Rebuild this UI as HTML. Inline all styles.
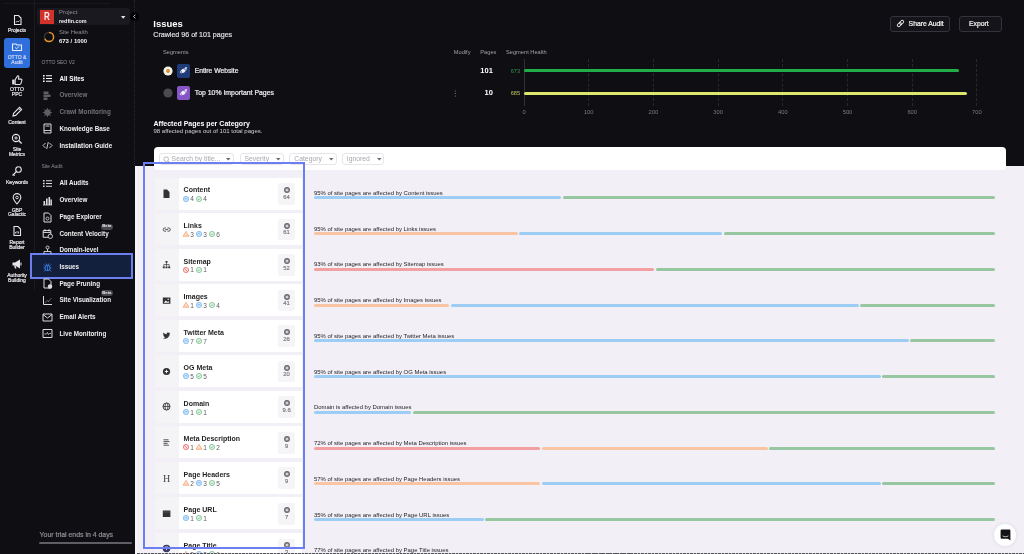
<!DOCTYPE html>
<html><head><meta charset="utf-8"><style>
html,body{margin:0;padding:0;width:1024px;height:554px;overflow:hidden;background:#0f0e13;font-family:"Liberation Sans",sans-serif}
.a{position:absolute;display:block}
.t{position:absolute;white-space:nowrap;font-family:"Liberation Sans",sans-serif}
#w{position:absolute;left:0;top:0;width:1024px;height:554px;overflow:hidden;filter:blur(0.25px);}
</style></head><body><div id="w">
<div class="a" style="left:0.00px;top:0.00px;width:1024.00px;height:554.00px;background:#0f0e13"></div>
<div class="a" style="left:135.00px;top:166.00px;width:889.00px;height:388.00px;background:#f2f0f6"></div>
<div class="a" style="left:33.50px;top:0.00px;width:1.00px;height:290.00px;background:#1b1a21"></div>
<div class="a" style="left:4.00px;top:2.50px;width:106.00px;height:0.80px;background:#19181e"></div>
<div class="a" style="left:3.80px;top:38.00px;width:26.50px;height:29.60px;background:#2f6fdc;border-radius:3px"></div>
<div class="t" style="left:-283.00px;width:600px;text-align:center;top:27.78px;font-size:5.0px;line-height:5.58px;color:#e8e8ea;-webkit-text-stroke:0.2px currentColor;">Projects</div>
<div class="t" style="left:-283.00px;width:600px;text-align:center;top:54.68px;font-size:5.0px;line-height:5.58px;color:#cfd8f5;-webkit-text-stroke:0.2px currentColor;">OTTO &</div>
<div class="t" style="left:-283.00px;width:600px;text-align:center;top:59.77px;font-size:5.0px;line-height:5.58px;color:#cfd8f5;-webkit-text-stroke:0.2px currentColor;">Audit</div>
<div class="t" style="left:-283.00px;width:600px;text-align:center;top:86.77px;font-size:5.0px;line-height:5.58px;color:#e8e8ea;-webkit-text-stroke:0.2px currentColor;">OTTO</div>
<div class="t" style="left:-283.00px;width:600px;text-align:center;top:92.37px;font-size:5.0px;line-height:5.58px;color:#e8e8ea;-webkit-text-stroke:0.2px currentColor;">PPC</div>
<div class="t" style="left:-283.00px;width:600px;text-align:center;top:119.77px;font-size:5.0px;line-height:5.58px;color:#e8e8ea;-webkit-text-stroke:0.2px currentColor;">Content</div>
<div class="t" style="left:-283.00px;width:600px;text-align:center;top:146.77px;font-size:5.0px;line-height:5.58px;color:#e8e8ea;-webkit-text-stroke:0.2px currentColor;">Site</div>
<div class="t" style="left:-283.00px;width:600px;text-align:center;top:152.27px;font-size:5.0px;line-height:5.58px;color:#e8e8ea;-webkit-text-stroke:0.2px currentColor;">Metrics</div>
<div class="t" style="left:-283.00px;width:600px;text-align:center;top:179.77px;font-size:5.0px;line-height:5.58px;color:#e8e8ea;-webkit-text-stroke:0.2px currentColor;">Keywords</div>
<div class="t" style="left:-283.00px;width:600px;text-align:center;top:207.77px;font-size:5.0px;line-height:5.58px;color:#e8e8ea;-webkit-text-stroke:0.2px currentColor;">GBP</div>
<div class="t" style="left:-283.00px;width:600px;text-align:center;top:212.37px;font-size:5.0px;line-height:5.58px;color:#e8e8ea;-webkit-text-stroke:0.2px currentColor;">Galactic</div>
<div class="t" style="left:-283.00px;width:600px;text-align:center;top:239.77px;font-size:5.0px;line-height:5.58px;color:#e8e8ea;-webkit-text-stroke:0.2px currentColor;">Report</div>
<div class="t" style="left:-283.00px;width:600px;text-align:center;top:245.27px;font-size:5.0px;line-height:5.58px;color:#e8e8ea;-webkit-text-stroke:0.2px currentColor;">Builder</div>
<div class="t" style="left:-283.00px;width:600px;text-align:center;top:272.78px;font-size:5.0px;line-height:5.58px;color:#e8e8ea;-webkit-text-stroke:0.2px currentColor;">Authority</div>
<div class="t" style="left:-283.00px;width:600px;text-align:center;top:278.28px;font-size:5.0px;line-height:5.58px;color:#e8e8ea;-webkit-text-stroke:0.2px currentColor;">Building</div>
<svg class="a" style="left:11.00px;top:13.60px;" width="12.0" height="12.0" viewBox="0 0 12.0 12.0"><g transform="scale(1.0)"><path d="M3.5 1.5h4l2.5 2.5v6.5h-6.5z" fill="none" stroke="#e6e6e8" stroke-width="1.1"/><path d="M5 8.5l1.2-1.5 1 1 1.3-1.5" fill="none" stroke="#e6e6e8" stroke-width="0.8"/></g></svg>
<svg class="a" style="left:11.00px;top:41.40px;" width="12.0" height="12.0" viewBox="0 0 12.0 12.0"><g transform="scale(1.0)"><path d="M1.5 3h3.5l1 1h4.5v5.5h-9z" fill="none" stroke="#e8eefc" stroke-width="1.1"/><path d="M4.2 6.5l1.4 1.3 2.4-2.4" fill="none" stroke="#e8eefc" stroke-width="1"/></g></svg>
<svg class="a" style="left:11.00px;top:73.80px;" width="12.0" height="12.0" viewBox="0 0 12.0 12.0"><g transform="scale(1.0)"><path d="M1.2 5.6h2.4v4.8H1.2z" fill="#e6e6e8"/><path d="M4.2 5.6l2.4-3.9c.9 0 1.4.6 1.2 1.5l-.4 1.9h2.6c.7 0 1.1.6.9 1.2l-1 3.3c-.2.5-.5.8-1 .8H4.2z" fill="none" stroke="#e6e6e8" stroke-width="1.05" stroke-linejoin="round"/></g></svg>
<svg class="a" style="left:11.00px;top:106.00px;" width="12.0" height="12.0" viewBox="0 0 12.0 12.0"><g transform="scale(1.0)"><path d="M2 10l.6-2.6 6-6 2 2-6 6z" fill="none" stroke="#e6e6e8" stroke-width="1.1"/><path d="M7.6 2.4l2 2" stroke="#e6e6e8" stroke-width="1"/></g></svg>
<svg class="a" style="left:11.00px;top:133.00px;" width="12.0" height="12.0" viewBox="0 0 12.0 12.0"><g transform="scale(1.0)"><circle cx="5" cy="5" r="3.6" fill="none" stroke="#e6e6e8" stroke-width="1.1"/><path d="M7.6 7.6l3 3" stroke="#e6e6e8" stroke-width="1.4"/><path d="M5 3.2v3.6M3.2 5h3.6" stroke="#e6e6e8" stroke-width="0.9"/></g></svg>
<svg class="a" style="left:11.00px;top:164.60px;" width="12.0" height="12.0" viewBox="0 0 12.0 12.0"><g transform="scale(1.0)"><circle cx="7.5" cy="4.5" r="2.8" fill="none" stroke="#e6e6e8" stroke-width="1.1"/><path d="M5.5 6.5l-4 4M2.5 9.5l1.2 1.2" stroke="#e6e6e8" stroke-width="1.1"/></g></svg>
<svg class="a" style="left:11.00px;top:193.00px;" width="12.0" height="12.0" viewBox="0 0 12.0 12.0"><g transform="scale(1.0)"><path d="M6 11c-2.5-3-3.8-5-3.8-6.6a3.8 3.8 0 0 1 7.6 0c0 1.6-1.3 3.6-3.8 6.6z" fill="none" stroke="#e6e6e8" stroke-width="1.1"/><circle cx="6" cy="4.5" r="1.3" fill="none" stroke="#e6e6e8" stroke-width="0.9"/></g></svg>
<svg class="a" style="left:11.00px;top:224.60px;" width="12.0" height="12.0" viewBox="0 0 12.0 12.0"><g transform="scale(1.0)"><path d="M3 1.5h4l2.5 2.5v6.5h-6.5z" fill="none" stroke="#e6e6e8" stroke-width="1.1"/><path d="M4.5 8.5v-1.5M6 8.5v-2.5M7.5 8.5v-2" stroke="#e6e6e8" stroke-width="0.8"/></g></svg>
<svg class="a" style="left:11.00px;top:257.50px;" width="12.0" height="12.0" viewBox="0 0 12.0 12.0"><g transform="scale(1.0)"><path d="M1.5 4.5h2.5l5-3v9l-5-3h-2.5z" fill="#e6e6e8"/><path d="M3 7.5l1 3h1.5l-1-3z" fill="#e6e6e8"/><path d="M10 4.5v3" stroke="#e6e6e8" stroke-width="1"/></g></svg>
<div class="a" style="left:37.00px;top:8.00px;width:92.60px;height:17.00px;background:#1a1920;border-radius:3px"></div>
<div class="a" style="left:40.00px;top:9.70px;width:14.00px;height:13.90px;background:#d2322a"></div>
<div class="t" style="left:-253.00px;width:600px;text-align:center;top:10.95px;font-size:10px;line-height:11.17px;color:#f6eeee;font-weight:bold;transform:scaleX(0.8);">R</div>
<div class="t" style="left:59.00px;top:9.26px;font-size:5.9px;line-height:6.59px;color:#8f8f95;">Project</div>
<div class="t" style="left:59.00px;top:17.81px;font-size:5.4px;line-height:6.03px;color:#f2f2f2;font-weight:bold;">redfin.com</div>
<svg class="a" style="left:120.60px;top:16.20px;" width="5" height="4" viewBox="0 0 5 4"><path d="M0 0h4.4l-2.2 2.8z" fill="#e6e6e6"/></svg>
<div class="a" style="left:134px;top:0;width:0;height:166px;border-left:1px dotted #2a292f"></div>
<svg class="a" style="left:129.50px;top:11.50px;" width="9" height="9" viewBox="0 0 9 9"><circle cx="4.5" cy="4.5" r="4.5" fill="#000"/><path d="M5.4 2.7l-1.8 1.8 1.8 1.8" fill="none" stroke="#ddd" stroke-width="0.9"/></svg>
<svg class="a" style="left:42.60px;top:31.00px;" width="12" height="12" viewBox="0 0 12 12"><circle cx="6" cy="6" r="4.6" fill="none" stroke="#e8962c" stroke-width="1.5" stroke-dasharray="19.5 9.4" transform="rotate(-90 6 6)"/><circle cx="6" cy="6" r="4.6" fill="none" stroke="#3a3530" stroke-width="1.5" stroke-dasharray="0 19.5 9.4 0" transform="rotate(-90 6 6)"/></svg>
<div class="t" style="left:59.00px;top:29.26px;font-size:5.9px;line-height:6.59px;color:#8f8f95;">Site Health</div>
<div class="t" style="left:59.00px;top:37.91px;font-size:5.96px;line-height:6.66px;color:#f2f2f2;font-weight:bold;">673 / 1000</div>
<div class="t" style="left:41.50px;top:60.07px;font-size:5.0px;line-height:5.58px;color:#8f8f95;">OTTO SEO V2</div>
<div class="t" style="left:59.40px;top:74.84px;font-size:6.3px;line-height:7.04px;color:#ffffff;font-weight:bold;">All Sites</div>
<div class="t" style="left:59.40px;top:91.24px;font-size:6.3px;line-height:7.04px;color:#727278;font-weight:bold;">Overview</div>
<div class="t" style="left:59.40px;top:108.04px;font-size:6.3px;line-height:7.04px;color:#727278;font-weight:bold;">Crawl Monitoring</div>
<div class="t" style="left:59.40px;top:124.84px;font-size:6.3px;line-height:7.04px;color:#f0f0f0;font-weight:bold;">Knowledge Base</div>
<div class="t" style="left:59.40px;top:141.64px;font-size:6.3px;line-height:7.04px;color:#f0f0f0;font-weight:bold;">Installation Guide</div>
<svg class="a" style="left:42.00px;top:73.30px;" width="11" height="11" viewBox="0 0 11 11"><path d="M1 2h1.6v1.6H1zM1 4.7h1.6v1.6H1zM1 7.4h1.6V9H1z" fill="#fff"/><path d="M4 2.8h6M4 5.5h6M4 8.2h6" stroke="#fff" stroke-width="1.1"/></svg>
<svg class="a" style="left:42.00px;top:89.70px;" width="11" height="11" viewBox="0 0 11 11"><path d="M1.5 1.5h5v2.5h-5zM1.5 4.5h7v2.5h-7zM1.5 7.5h4v2.5h-4z" fill="#5e5e63"/></svg>
<svg class="a" style="left:42.00px;top:106.50px;" width="11" height="11" viewBox="0 0 11 11"><circle cx="5.5" cy="5.5" r="3.2" fill="#5e5e63"/><path d="M5.5 1v9M1 5.5h9M2.3 2.3l6.4 6.4M8.7 2.3l-6.4 6.4" stroke="#5e5e63" stroke-width="0.9"/></svg>
<svg class="a" style="left:42.00px;top:123.30px;" width="11" height="11" viewBox="0 0 11 11"><path d="M2 1h7v9H2z" fill="none" stroke="#dcdcdc" stroke-width="1"/><path d="M2 7.5h7M3.5 3h4" stroke="#dcdcdc" stroke-width="0.9"/></svg>
<svg class="a" style="left:42.00px;top:140.10px;" width="11" height="11" viewBox="0 0 11 11"><path d="M3.5 3L1 5.5 3.5 8M7.5 3L10 5.5 7.5 8M6.3 2L4.7 9" fill="none" stroke="#dcdcdc" stroke-width="0.9"/></svg>
<div class="t" style="left:41.50px;top:163.97px;font-size:5.0px;line-height:5.58px;color:#8f8f95;">Site Audit</div>
<div class="a" style="left:30.30px;top:252.60px;width:103.20px;height:26.70px;background:#13203d;border:2px solid #6c7ff2;box-sizing:border-box"></div>
<div class="t" style="left:59.40px;top:179.34px;font-size:6.3px;line-height:7.04px;color:#f0f0f0;font-weight:bold;">All Audits</div>
<div class="t" style="left:59.40px;top:196.14px;font-size:6.3px;line-height:7.04px;color:#f0f0f0;font-weight:bold;">Overview</div>
<div class="t" style="left:59.40px;top:212.94px;font-size:6.3px;line-height:7.04px;color:#f0f0f0;font-weight:bold;">Page Explorer</div>
<div class="t" style="left:59.40px;top:229.74px;font-size:6.3px;line-height:7.04px;color:#f0f0f0;font-weight:bold;">Content Velocity</div>
<div class="t" style="left:59.40px;top:246.14px;font-size:6.3px;line-height:7.04px;color:#f0f0f0;font-weight:bold;">Domain-level</div>
<div class="t" style="left:59.40px;top:262.94px;font-size:6.3px;line-height:7.04px;color:#f0f0f0;font-weight:bold;">Issues</div>
<div class="t" style="left:59.40px;top:279.74px;font-size:6.3px;line-height:7.04px;color:#f0f0f0;font-weight:bold;">Page Pruning</div>
<div class="t" style="left:59.40px;top:296.34px;font-size:6.3px;line-height:7.04px;color:#f0f0f0;font-weight:bold;">Site Visualization</div>
<div class="t" style="left:59.40px;top:313.14px;font-size:6.3px;line-height:7.04px;color:#f0f0f0;font-weight:bold;">Email Alerts</div>
<div class="t" style="left:59.40px;top:329.74px;font-size:6.3px;line-height:7.04px;color:#f0f0f0;font-weight:bold;">Live Monitoring</div>
<svg class="a" style="left:42.00px;top:177.90px;" width="11" height="11" viewBox="0 0 11 11"><path d="M1 2h1.6v1.6H1zM1 4.7h1.6v1.6H1zM1 7.4h1.6V9H1z" fill="#dcdcdc"/><path d="M4 2.8h6M4 5.5h6M4 8.2h6" stroke="#dcdcdc" stroke-width="1.1"/></svg>
<svg class="a" style="left:42.00px;top:194.70px;" width="11" height="11" viewBox="0 0 11 11"><path d="M1 10h9" stroke="#dcdcdc" stroke-width="0.8"/><path d="M1.5 6h1.6v4H1.5zM4 3.5h1.6V10H4zM6.5 2h1.6v8H6.5zM8.5 4.5h1.4V10H8.5z" fill="#dcdcdc"/></svg>
<svg class="a" style="left:42.00px;top:211.50px;" width="11" height="11" viewBox="0 0 11 11"><path d="M2 1h4.5l2.5 2.5V10H2z" fill="none" stroke="#dcdcdc" stroke-width="1"/><circle cx="5.5" cy="6.5" r="1.5" fill="none" stroke="#dcdcdc" stroke-width="0.8"/></svg>
<svg class="a" style="left:42.00px;top:228.30px;" width="11" height="11" viewBox="0 0 11 11"><path d="M1.2 2.5h7.6v6.8H1.2z" fill="none" stroke="#dcdcdc" stroke-width="1"/><path d="M1.2 4.5h7.6M3 1v2.5M7 1v2.5" stroke="#dcdcdc" stroke-width="0.9"/><circle cx="8.3" cy="8.3" r="2.2" fill="#0f0e13" stroke="#dcdcdc" stroke-width="0.9"/></svg>
<svg class="a" style="left:42.00px;top:244.70px;" width="11" height="11" viewBox="0 0 11 11"><circle cx="5.5" cy="2.5" r="1.5" fill="none" stroke="#dcdcdc" stroke-width="0.9"/><path d="M5.5 4v2.5M2 9V6.5h7V9" fill="none" stroke="#dcdcdc" stroke-width="0.9"/></svg>
<svg class="a" style="left:42.00px;top:261.50px;" width="11" height="11" viewBox="0 0 11 11"><circle cx="5.5" cy="6" r="2.6" fill="none" stroke="#3c7ff0" stroke-width="1"/><path d="M5.5 3.4v5.2M1.5 6h1.4M8.1 6h1.4M2 2.5l1.5 1.5M9 2.5l-1.5 1.5M2 9.5l1.5-1.5M9 9.5l-1.5-1.5M4 1.5l.8 1.5M7 1.5l-.8 1.5" stroke="#3c7ff0" stroke-width="0.8"/></svg>
<svg class="a" style="left:42.00px;top:278.30px;" width="11" height="11" viewBox="0 0 11 11"><path d="M2 1h4.5l2.5 2.5V10H2z" fill="none" stroke="#dcdcdc" stroke-width="1"/><circle cx="8" cy="8.5" r="2.2" fill="#dcdcdc"/></svg>
<svg class="a" style="left:42.00px;top:294.90px;" width="11" height="11" viewBox="0 0 11 11"><path d="M1.5 1v8.5H10" fill="none" stroke="#dcdcdc" stroke-width="1"/><path d="M3.5 7.5l1.5-2 1.5 1 2.5-3" fill="none" stroke="#dcdcdc" stroke-width="0.8" stroke-dasharray="1 0.8"/></svg>
<svg class="a" style="left:42.00px;top:311.70px;" width="11" height="11" viewBox="0 0 11 11"><path d="M1 2h9v7H1z" fill="none" stroke="#dcdcdc" stroke-width="1"/><path d="M1 2.5l4.5 3.5 4.5-3.5" fill="none" stroke="#dcdcdc" stroke-width="1"/></svg>
<svg class="a" style="left:42.00px;top:328.30px;" width="11" height="11" viewBox="0 0 11 11"><path d="M1 1.5h9v8H1z" fill="none" stroke="#dcdcdc" stroke-width="1"/><path d="M2.5 6h2l1-1.5 1 2 1-1h1.5" fill="none" stroke="#dcdcdc" stroke-width="0.8"/></svg>
<div class="a" style="left:100.50px;top:223.50px;width:12.60px;height:6.00px;background:#46464c;border-radius:3px"></div>
<div class="t" style="left:-193.20px;width:600px;text-align:center;top:224.27px;font-size:4.3px;line-height:4.80px;color:#e8e8ea;font-weight:bold;">Beta</div>
<div class="a" style="left:100.50px;top:290.00px;width:12.60px;height:6.00px;background:#46464c;border-radius:3px"></div>
<div class="t" style="left:-193.20px;width:600px;text-align:center;top:290.77px;font-size:4.3px;line-height:4.80px;color:#e8e8ea;font-weight:bold;">Beta</div>
<div class="t" style="left:39.60px;top:531.09px;font-size:6.92px;line-height:7.73px;color:#8c8c92;-webkit-text-stroke:0.22px currentColor;">Your trial ends in 4 days</div>
<div class="a" style="left:39.10px;top:541.90px;width:93.30px;height:2.20px;background:#5e5e64;border-radius:1px"></div>
<div class="a" style="left:135.00px;top:166.00px;width:2.00px;height:388.00px;background:#f6f5f9"></div>
<div class="t" style="left:153.30px;top:18.90px;font-size:9.5px;line-height:10.61px;color:#ffffff;font-weight:bold;">Issues</div>
<div class="t" style="left:153.30px;top:32.17px;font-size:7.1px;line-height:7.93px;color:#dcdcde;-webkit-text-stroke:0.22px currentColor;">Crawled 96 of 101 pages</div>
<div class="a" style="left:890.20px;top:16.30px;width:59.60px;height:15.30px;border:1px solid #34333a;border-radius:3px;box-sizing:border-box;background:#15141a"></div>
<svg class="a" style="left:895.50px;top:19.30px;" width="9" height="9" viewBox="0 0 9 9"><g transform="rotate(-45 4.5 4.5)"><rect x="0.6" y="3.1" width="4.6" height="2.8" rx="1.4" fill="none" stroke="#eee" stroke-width="0.95"/><rect x="3.8" y="3.1" width="4.6" height="2.8" rx="1.4" fill="none" stroke="#eee" stroke-width="0.95"/></g></svg>
<div class="t" style="left:908.60px;top:20.36px;font-size:6.8px;line-height:7.60px;color:#f2f2f2;-webkit-text-stroke:0.22px currentColor;">Share Audit</div>
<div class="a" style="left:958.50px;top:16.30px;width:43.60px;height:15.30px;border:1px solid #34333a;border-radius:3px;box-sizing:border-box;background:#15141a"></div>
<div class="t" style="left:678.90px;width:600px;text-align:center;top:20.36px;font-size:6.8px;line-height:7.60px;color:#f2f2f2;-webkit-text-stroke:0.22px currentColor;">Export</div>
<div class="t" style="left:163.00px;top:48.78px;font-size:5.7px;line-height:6.37px;color:#a0a0a5;">Segments</div>
<div class="t" style="left:453.75px;top:48.78px;font-size:5.7px;line-height:6.37px;color:#a0a0a5;">Modify</div>
<div class="t" style="left:480.30px;top:48.78px;font-size:5.7px;line-height:6.37px;color:#a0a0a5;">Pages</div>
<div class="t" style="left:506.00px;top:48.78px;font-size:5.7px;line-height:6.37px;color:#a0a0a5;">Segment Health</div>
<svg class="a" style="left:162.80px;top:66.20px;" width="10" height="10" viewBox="0 0 10 10"><circle cx="5" cy="5" r="4.6" fill="#f4f1ea"/><circle cx="5" cy="5" r="1.9" fill="#d98c2a"/></svg>
<svg class="a" style="left:162.80px;top:88.30px;" width="10" height="10" viewBox="0 0 10 10"><circle cx="5" cy="5" r="4.6" fill="#4a4a4f"/></svg>
<div class="a" style="left:177.00px;top:64.00px;width:13.00px;height:13.70px;background:#1f3c78;border-radius:2px"></div>
<div class="a" style="left:177.00px;top:86.00px;width:13.00px;height:13.70px;background:#8756c6;border-radius:2px"></div>
<svg class="a" style="left:179.00px;top:66.35px;" width="9" height="9" viewBox="0 0 9 9"><circle cx="4.2" cy="4.8" r="1.9" fill="#f4f4fa"/><ellipse cx="4.2" cy="4.8" rx="3.4" ry="1.3" transform="rotate(-30 4.2 4.8)" fill="none" stroke="#f4f4fa" stroke-width="0.7"/><circle cx="7" cy="2" r="0.9" fill="#f4f4fa"/></svg>
<svg class="a" style="left:179.00px;top:88.35px;" width="9" height="9" viewBox="0 0 9 9"><circle cx="4.2" cy="4.8" r="1.9" fill="#f4f4fa"/><ellipse cx="4.2" cy="4.8" rx="3.4" ry="1.3" transform="rotate(-30 4.2 4.8)" fill="none" stroke="#f4f4fa" stroke-width="0.7"/><circle cx="7" cy="2" r="0.9" fill="#f4f4fa"/></svg>
<div class="t" style="left:194.70px;top:67.19px;font-size:6.75px;line-height:7.54px;color:#ececee;-webkit-text-stroke:0.22px currentColor;">Entire Website</div>
<div class="t" style="left:194.70px;top:89.10px;font-size:6.9px;line-height:7.71px;color:#ececee;-webkit-text-stroke:0.22px currentColor;">Top 10% Important Pages</div>
<div class="t" style="right:531.20px;top:66.76px;font-size:7.5px;line-height:8.38px;color:#ffffff;font-weight:bold;">101</div>
<div class="t" style="right:531.20px;top:88.76px;font-size:7.5px;line-height:8.38px;color:#ffffff;font-weight:bold;">10</div>
<svg class="a" style="left:453.50px;top:89.50px;" width="3" height="8" viewBox="0 0 3 8"><circle cx="1.3" cy="1" r=".6" fill="#888"/><circle cx="1.3" cy="3.5" r=".6" fill="#888"/><circle cx="1.3" cy="6" r=".6" fill="#888"/></svg>
<div class="t" style="right:504.00px;top:68.04px;font-size:5.6px;line-height:6.26px;color:#2f9a48;">673</div>
<div class="t" style="right:504.00px;top:90.24px;font-size:5.6px;line-height:6.26px;color:#c2c95c;">685</div>
<div class="a" style="left:523.50px;top:58.75px;width:1.00px;height:46.85px;background:#323137"></div>
<div class="a" style="left:588.20px;top:58.75px;height:47px;width:0;border-left:1px dashed #29282e"></div>
<div class="a" style="left:652.90px;top:58.75px;height:47px;width:0;border-left:1px dashed #29282e"></div>
<div class="a" style="left:717.60px;top:58.75px;height:47px;width:0;border-left:1px dashed #29282e"></div>
<div class="a" style="left:782.30px;top:58.75px;height:47px;width:0;border-left:1px dashed #29282e"></div>
<div class="a" style="left:847.00px;top:58.75px;height:47px;width:0;border-left:1px dashed #29282e"></div>
<div class="a" style="left:911.70px;top:58.75px;height:47px;width:0;border-left:1px dashed #29282e"></div>
<div class="a" style="left:976.40px;top:58.75px;height:47px;width:0;border-left:1px dashed #29282e"></div>
<div class="t" style="left:224.00px;width:600px;text-align:center;top:108.95px;font-size:5.75px;line-height:6.42px;color:#7c7c82;">0</div>
<div class="t" style="left:288.70px;width:600px;text-align:center;top:108.95px;font-size:5.75px;line-height:6.42px;color:#7c7c82;">100</div>
<div class="t" style="left:353.40px;width:600px;text-align:center;top:108.95px;font-size:5.75px;line-height:6.42px;color:#7c7c82;">200</div>
<div class="t" style="left:418.10px;width:600px;text-align:center;top:108.95px;font-size:5.75px;line-height:6.42px;color:#7c7c82;">300</div>
<div class="t" style="left:482.80px;width:600px;text-align:center;top:108.95px;font-size:5.75px;line-height:6.42px;color:#7c7c82;">400</div>
<div class="t" style="left:547.50px;width:600px;text-align:center;top:108.95px;font-size:5.75px;line-height:6.42px;color:#7c7c82;">500</div>
<div class="t" style="left:612.20px;width:600px;text-align:center;top:108.95px;font-size:5.75px;line-height:6.42px;color:#7c7c82;">600</div>
<div class="t" style="left:676.90px;width:600px;text-align:center;top:108.95px;font-size:5.75px;line-height:6.42px;color:#7c7c82;">700</div>
<div class="a" style="left:524.00px;top:69.20px;width:435.43px;height:3.00px;background:#22ad4b;border-radius:1.5px"></div>
<div class="a" style="left:524.00px;top:92.10px;width:443.19px;height:3.00px;background:#dce56c;border-radius:1.5px"></div>
<div class="t" style="left:153.50px;top:119.51px;font-size:7.06px;line-height:7.89px;color:#ffffff;font-weight:bold;">Affected Pages per Category</div>
<div class="t" style="left:153.50px;top:128.19px;font-size:6.03px;line-height:6.74px;color:#d0d0d4;">98 affected pages out of 101 total pages.</div>
<div class="a" style="left:153.60px;top:147.20px;width:852.90px;height:22.40px;background:#ffffff;border-radius:4px"></div>
<div class="a" style="left:159.00px;top:152.70px;width:75.00px;height:11.90px;border:1px solid #e6e6ea;border-radius:3px;box-sizing:border-box;background:#fff"></div>
<div class="t" style="left:171.60px;top:154.86px;font-size:6.8px;line-height:7.60px;color:#a9a9ae;">Search by title...</div>
<svg class="a" style="left:226.00px;top:157.50px;" width="5" height="3" viewBox="0 0 5 3"><path d="M0 0h4.5l-2.25 2.6z" fill="#6a6a70"/></svg>
<div class="a" style="left:239.50px;top:152.70px;width:44.50px;height:11.90px;border:1px solid #e6e6ea;border-radius:3px;box-sizing:border-box;background:#fff"></div>
<div class="t" style="left:244.50px;top:154.86px;font-size:6.8px;line-height:7.60px;color:#a9a9ae;">Severity</div>
<svg class="a" style="left:276.00px;top:157.50px;" width="5" height="3" viewBox="0 0 5 3"><path d="M0 0h4.5l-2.25 2.6z" fill="#6a6a70"/></svg>
<div class="a" style="left:289.30px;top:152.70px;width:47.50px;height:11.90px;border:1px solid #e6e6ea;border-radius:3px;box-sizing:border-box;background:#fff"></div>
<div class="t" style="left:294.30px;top:154.86px;font-size:6.8px;line-height:7.60px;color:#a9a9ae;">Category</div>
<svg class="a" style="left:328.80px;top:157.50px;" width="5" height="3" viewBox="0 0 5 3"><path d="M0 0h4.5l-2.25 2.6z" fill="#6a6a70"/></svg>
<div class="a" style="left:341.80px;top:152.70px;width:42.70px;height:11.90px;border:1px solid #e6e6ea;border-radius:3px;box-sizing:border-box;background:#fff"></div>
<div class="t" style="left:346.80px;top:154.86px;font-size:6.8px;line-height:7.60px;color:#a9a9ae;">Ignored</div>
<svg class="a" style="left:376.50px;top:157.50px;" width="5" height="3" viewBox="0 0 5 3"><path d="M0 0h4.5l-2.25 2.6z" fill="#6a6a70"/></svg>
<svg class="a" style="left:163.30px;top:155.80px;" width="7" height="8" viewBox="0 0 7 8"><circle cx="3.2" cy="3.2" r="2.3" fill="none" stroke="#aaa" stroke-width="0.8"/><path d="M4.9 4.9l1.6 1.6" stroke="#aaa" stroke-width="0.8"/></svg>
<div class="a" style="left:155.00px;top:177.70px;width:23.70px;height:32.10px;background:#f4f3f6"></div>
<div class="a" style="left:178.70px;top:177.70px;width:123.00px;height:32.10px;background:#ffffff"></div>
<div class="a" style="left:278.20px;top:183.30px;width:17.00px;height:21.60px;background:#f5f5f7;border-radius:2px"></div>
<svg class="a" style="left:283.60px;top:187.00px;" width="6" height="6" viewBox="0 0 6 6"><circle cx="3" cy="3" r="2.4" fill="#9a9a9e" stroke="#6a6a6e" stroke-width="1.1"/><path d="M3 1.9v2.2M1.9 3h2.2" stroke="#f4f4f6" stroke-width="0.8"/></svg>
<div class="t" style="left:-13.40px;width:600px;text-align:center;top:193.87px;font-size:5.9px;line-height:6.59px;color:#76767a;-webkit-text-stroke:0.15px currentColor;">64</div>
<div class="t" style="left:183.60px;top:186.46px;font-size:7.0px;line-height:7.82px;color:#1f1f22;font-weight:bold;">Content</div>
<div class="t" style="left:190.20px;top:195.42px;font-size:6.5px;line-height:7.26px;color:#5c5c60;">4</div>
<div class="t" style="left:203.20px;top:195.42px;font-size:6.5px;line-height:7.26px;color:#5c5c60;">4</div>
<svg class="a" style="left:180.00px;top:194.70px;" width="120" height="8" viewBox="0 0 120 8"><circle cx="6" cy="4" r="2.7" fill="#c9e3fa" stroke="#7db9ef" stroke-width="0.75"/><path d="M4.7 4.6a1.3 1.3 0 0 1 2.6 0" fill="none" stroke="#6fb0ec" stroke-width="0.6"/><circle cx="19" cy="4" r="2.6" fill="#e3f4e7" stroke="#78c08a" stroke-width="0.8"/><path d="M17.8 4l.9.9 1.5-1.6" fill="none" stroke="#5fb072" stroke-width="0.7"/></svg>
<svg class="a" style="left:162.10px;top:189.20px;" width="9" height="9" viewBox="0 0 9 9"><path d="M1.5 0.5h3.5l2.5 2.5v6.5h-6z" fill="#333"/></svg>
<div class="t" style="left:313.90px;top:189.94px;font-size:5.95px;line-height:6.65px;color:#1e1e22;">95% of site pages are affected by Content issues</div>
<div class="a" style="left:314.00px;top:196.00px;width:247.00px;height:3.00px;background:#9dccf4;border-radius:1.5px"></div>
<div class="a" style="left:562.60px;top:196.00px;width:432.00px;height:3.00px;background:#96c7a0;border-radius:1.5px"></div>
<div class="a" style="left:155.00px;top:213.22px;width:23.70px;height:32.10px;background:#f4f3f6"></div>
<div class="a" style="left:178.70px;top:213.22px;width:123.00px;height:32.10px;background:#ffffff"></div>
<div class="a" style="left:278.20px;top:218.82px;width:17.00px;height:21.60px;background:#f5f5f7;border-radius:2px"></div>
<svg class="a" style="left:283.60px;top:222.52px;" width="6" height="6" viewBox="0 0 6 6"><circle cx="3" cy="3" r="2.4" fill="#9a9a9e" stroke="#6a6a6e" stroke-width="1.1"/><path d="M3 1.9v2.2M1.9 3h2.2" stroke="#f4f4f6" stroke-width="0.8"/></svg>
<div class="t" style="left:-13.40px;width:600px;text-align:center;top:229.39px;font-size:5.9px;line-height:6.59px;color:#76767a;-webkit-text-stroke:0.15px currentColor;">61</div>
<div class="t" style="left:183.60px;top:221.98px;font-size:7.0px;line-height:7.82px;color:#1f1f22;font-weight:bold;">Links</div>
<div class="t" style="left:190.20px;top:230.94px;font-size:6.5px;line-height:7.26px;color:#5c5c60;">3</div>
<div class="t" style="left:203.20px;top:230.94px;font-size:6.5px;line-height:7.26px;color:#5c5c60;">3</div>
<div class="t" style="left:216.20px;top:230.94px;font-size:6.5px;line-height:7.26px;color:#5c5c60;">6</div>
<svg class="a" style="left:180.00px;top:230.22px;" width="120" height="8" viewBox="0 0 120 8"><path d="M6 1.2999999999999998L9 6.3H3z" fill="#fcd3b6" stroke="#f4a272" stroke-width="0.7" stroke-linejoin="round"/><path d="M6 3.1v1.6" stroke="#fff" stroke-width="0.6"/><circle cx="19" cy="4" r="2.7" fill="#c9e3fa" stroke="#7db9ef" stroke-width="0.75"/><path d="M17.7 4.6a1.3 1.3 0 0 1 2.6 0" fill="none" stroke="#6fb0ec" stroke-width="0.6"/><circle cx="32" cy="4" r="2.6" fill="#e3f4e7" stroke="#78c08a" stroke-width="0.8"/><path d="M30.8 4l.9.9 1.5-1.6" fill="none" stroke="#5fb072" stroke-width="0.7"/></svg>
<svg class="a" style="left:162.10px;top:224.72px;" width="9" height="9" viewBox="0 0 9 9"><path d="M4 3H2.8a1.6 1.6 0 0 0 0 3.2H4M5.5 3h1.2a1.6 1.6 0 0 1 0 3.2H5.5M3.3 4.6h2.9" fill="none" stroke="#444" stroke-width="0.9"/></svg>
<div class="t" style="left:313.90px;top:225.69px;font-size:5.95px;line-height:6.65px;color:#1e1e22;">95% of site pages are affected by Links issues</div>
<div class="a" style="left:314.00px;top:232.00px;width:203.50px;height:3.00px;background:#f8c4a2;border-radius:1.5px"></div>
<div class="a" style="left:519.20px;top:232.00px;width:202.80px;height:3.00px;background:#9dccf4;border-radius:1.5px"></div>
<div class="a" style="left:724.00px;top:232.00px;width:270.60px;height:3.00px;background:#96c7a0;border-radius:1.5px"></div>
<div class="a" style="left:155.00px;top:248.74px;width:23.70px;height:32.10px;background:#f4f3f6"></div>
<div class="a" style="left:178.70px;top:248.74px;width:123.00px;height:32.10px;background:#ffffff"></div>
<div class="a" style="left:278.20px;top:254.34px;width:17.00px;height:21.60px;background:#f5f5f7;border-radius:2px"></div>
<svg class="a" style="left:283.60px;top:258.04px;" width="6" height="6" viewBox="0 0 6 6"><circle cx="3" cy="3" r="2.4" fill="#9a9a9e" stroke="#6a6a6e" stroke-width="1.1"/><path d="M3 1.9v2.2M1.9 3h2.2" stroke="#f4f4f6" stroke-width="0.8"/></svg>
<div class="t" style="left:-13.40px;width:600px;text-align:center;top:264.91px;font-size:5.9px;line-height:6.59px;color:#76767a;-webkit-text-stroke:0.15px currentColor;">52</div>
<div class="t" style="left:183.60px;top:257.51px;font-size:7.0px;line-height:7.82px;color:#1f1f22;font-weight:bold;">Sitemap</div>
<div class="t" style="left:190.20px;top:266.46px;font-size:6.5px;line-height:7.26px;color:#5c5c60;">1</div>
<div class="t" style="left:203.20px;top:266.46px;font-size:6.5px;line-height:7.26px;color:#5c5c60;">1</div>
<svg class="a" style="left:180.00px;top:265.74px;" width="120" height="8" viewBox="0 0 120 8"><circle cx="6" cy="4" r="2.6" fill="#fde3e1" stroke="#ec6a62" stroke-width="0.8"/><path d="M4.2 2.2L7.8 5.8" stroke="#ec6a62" stroke-width="0.8"/><circle cx="19" cy="4" r="2.6" fill="#e3f4e7" stroke="#78c08a" stroke-width="0.8"/><path d="M17.8 4l.9.9 1.5-1.6" fill="none" stroke="#5fb072" stroke-width="0.7"/></svg>
<svg class="a" style="left:162.10px;top:260.24px;" width="9" height="9" viewBox="0 0 9 9"><path d="M3.5 1h2v1.8h-2zM0.8 6.5h2v1.8h-2zM3.5 6.5h2v1.8h-2zM6.2 6.5h2v1.8h-2z" fill="#333"/><path d="M4.5 2.8v3.7M1.8 6.5V4.6h5.4v1.9" fill="none" stroke="#333" stroke-width="0.7"/></svg>
<div class="t" style="left:313.90px;top:261.44px;font-size:5.95px;line-height:6.65px;color:#1e1e22;">93% of site pages are affected by Sitemap issues</div>
<div class="a" style="left:314.00px;top:268.00px;width:340.00px;height:3.00px;background:#f2a0a2;border-radius:1.5px"></div>
<div class="a" style="left:655.60px;top:268.00px;width:339.00px;height:3.00px;background:#96c7a0;border-radius:1.5px"></div>
<div class="a" style="left:155.00px;top:284.26px;width:23.70px;height:32.10px;background:#f4f3f6"></div>
<div class="a" style="left:178.70px;top:284.26px;width:123.00px;height:32.10px;background:#ffffff"></div>
<div class="a" style="left:278.20px;top:289.86px;width:17.00px;height:21.60px;background:#f5f5f7;border-radius:2px"></div>
<svg class="a" style="left:283.60px;top:293.56px;" width="6" height="6" viewBox="0 0 6 6"><circle cx="3" cy="3" r="2.4" fill="#9a9a9e" stroke="#6a6a6e" stroke-width="1.1"/><path d="M3 1.9v2.2M1.9 3h2.2" stroke="#f4f4f6" stroke-width="0.8"/></svg>
<div class="t" style="left:-13.40px;width:600px;text-align:center;top:300.43px;font-size:5.9px;line-height:6.59px;color:#76767a;-webkit-text-stroke:0.15px currentColor;">41</div>
<div class="t" style="left:183.60px;top:293.03px;font-size:7.0px;line-height:7.82px;color:#1f1f22;font-weight:bold;">Images</div>
<div class="t" style="left:190.20px;top:301.98px;font-size:6.5px;line-height:7.26px;color:#5c5c60;">1</div>
<div class="t" style="left:203.20px;top:301.98px;font-size:6.5px;line-height:7.26px;color:#5c5c60;">3</div>
<div class="t" style="left:216.20px;top:301.98px;font-size:6.5px;line-height:7.26px;color:#5c5c60;">4</div>
<svg class="a" style="left:180.00px;top:301.26px;" width="120" height="8" viewBox="0 0 120 8"><path d="M6 1.2999999999999998L9 6.3H3z" fill="#fcd3b6" stroke="#f4a272" stroke-width="0.7" stroke-linejoin="round"/><path d="M6 3.1v1.6" stroke="#fff" stroke-width="0.6"/><circle cx="19" cy="4" r="2.7" fill="#c9e3fa" stroke="#7db9ef" stroke-width="0.75"/><path d="M17.7 4.6a1.3 1.3 0 0 1 2.6 0" fill="none" stroke="#6fb0ec" stroke-width="0.6"/><circle cx="32" cy="4" r="2.6" fill="#e3f4e7" stroke="#78c08a" stroke-width="0.8"/><path d="M30.8 4l.9.9 1.5-1.6" fill="none" stroke="#5fb072" stroke-width="0.7"/></svg>
<svg class="a" style="left:162.10px;top:295.76px;" width="9" height="9" viewBox="0 0 9 9"><path d="M0.8 1.5h7.6v6.3H0.8z" fill="#333"/><path d="M1.8 6.8l2-2.2 1.4 1.3 1-.9 1.2 1.8z" fill="#fff"/><circle cx="6.2" cy="3.3" r=".7" fill="#fff"/></svg>
<div class="t" style="left:313.90px;top:297.19px;font-size:5.95px;line-height:6.65px;color:#1e1e22;">95% of site pages are affected by Images issues</div>
<div class="a" style="left:314.00px;top:304.00px;width:135.40px;height:3.00px;background:#f8c4a2;border-radius:1.5px"></div>
<div class="a" style="left:451.20px;top:304.00px;width:407.50px;height:3.00px;background:#9dccf4;border-radius:1.5px"></div>
<div class="a" style="left:859.70px;top:304.00px;width:134.90px;height:3.00px;background:#96c7a0;border-radius:1.5px"></div>
<div class="a" style="left:155.00px;top:319.78px;width:23.70px;height:32.10px;background:#f4f3f6"></div>
<div class="a" style="left:178.70px;top:319.78px;width:123.00px;height:32.10px;background:#ffffff"></div>
<div class="a" style="left:278.20px;top:325.38px;width:17.00px;height:21.60px;background:#f5f5f7;border-radius:2px"></div>
<svg class="a" style="left:283.60px;top:329.08px;" width="6" height="6" viewBox="0 0 6 6"><circle cx="3" cy="3" r="2.4" fill="#9a9a9e" stroke="#6a6a6e" stroke-width="1.1"/><path d="M3 1.9v2.2M1.9 3h2.2" stroke="#f4f4f6" stroke-width="0.8"/></svg>
<div class="t" style="left:-13.40px;width:600px;text-align:center;top:335.95px;font-size:5.9px;line-height:6.59px;color:#76767a;-webkit-text-stroke:0.15px currentColor;">26</div>
<div class="t" style="left:183.60px;top:328.55px;font-size:7.0px;line-height:7.82px;color:#1f1f22;font-weight:bold;">Twitter Meta</div>
<div class="t" style="left:190.20px;top:337.50px;font-size:6.5px;line-height:7.26px;color:#5c5c60;">7</div>
<div class="t" style="left:203.20px;top:337.50px;font-size:6.5px;line-height:7.26px;color:#5c5c60;">7</div>
<svg class="a" style="left:180.00px;top:336.78px;" width="120" height="8" viewBox="0 0 120 8"><circle cx="6" cy="4" r="2.7" fill="#c9e3fa" stroke="#7db9ef" stroke-width="0.75"/><path d="M4.7 4.6a1.3 1.3 0 0 1 2.6 0" fill="none" stroke="#6fb0ec" stroke-width="0.6"/><circle cx="19" cy="4" r="2.6" fill="#e3f4e7" stroke="#78c08a" stroke-width="0.8"/><path d="M17.8 4l.9.9 1.5-1.6" fill="none" stroke="#5fb072" stroke-width="0.7"/></svg>
<svg class="a" style="left:162.10px;top:331.28px;" width="9" height="9" viewBox="0 0 9 9"><path d="M8.5 2.2c-.3.1-.6.2-.9.2.3-.2.6-.5.7-.9-.3.2-.6.3-1 .4A1.6 1.6 0 0 0 4.6 3.3 4.5 4.5 0 0 1 1.3 1.6a1.6 1.6 0 0 0 .5 2.1c-.3 0-.5-.1-.7-.2 0 .8.5 1.4 1.3 1.6-.2.1-.5.1-.7 0 .2.6.8 1.1 1.5 1.1A3.2 3.2 0 0 1 .8 6.9 4.5 4.5 0 0 0 7.7 3v-.2c.3-.2.6-.4.8-.6z" fill="#333"/></svg>
<div class="t" style="left:313.90px;top:332.94px;font-size:5.95px;line-height:6.65px;color:#1e1e22;">95% of site pages are affected by Twitter Meta issues</div>
<div class="a" style="left:314.00px;top:339.00px;width:595.00px;height:3.00px;background:#9dccf4;border-radius:1.5px"></div>
<div class="a" style="left:910.40px;top:339.00px;width:84.20px;height:3.00px;background:#96c7a0;border-radius:1.5px"></div>
<div class="a" style="left:155.00px;top:355.30px;width:23.70px;height:32.10px;background:#f4f3f6"></div>
<div class="a" style="left:178.70px;top:355.30px;width:123.00px;height:32.10px;background:#ffffff"></div>
<div class="a" style="left:278.20px;top:360.90px;width:17.00px;height:21.60px;background:#f5f5f7;border-radius:2px"></div>
<svg class="a" style="left:283.60px;top:364.60px;" width="6" height="6" viewBox="0 0 6 6"><circle cx="3" cy="3" r="2.4" fill="#9a9a9e" stroke="#6a6a6e" stroke-width="1.1"/><path d="M3 1.9v2.2M1.9 3h2.2" stroke="#f4f4f6" stroke-width="0.8"/></svg>
<div class="t" style="left:-13.40px;width:600px;text-align:center;top:371.47px;font-size:5.9px;line-height:6.59px;color:#76767a;-webkit-text-stroke:0.15px currentColor;">20</div>
<div class="t" style="left:183.60px;top:364.07px;font-size:7.0px;line-height:7.82px;color:#1f1f22;font-weight:bold;">OG Meta</div>
<div class="t" style="left:190.20px;top:373.02px;font-size:6.5px;line-height:7.26px;color:#5c5c60;">5</div>
<div class="t" style="left:203.20px;top:373.02px;font-size:6.5px;line-height:7.26px;color:#5c5c60;">5</div>
<svg class="a" style="left:180.00px;top:372.30px;" width="120" height="8" viewBox="0 0 120 8"><circle cx="6" cy="4" r="2.7" fill="#c9e3fa" stroke="#7db9ef" stroke-width="0.75"/><path d="M4.7 4.6a1.3 1.3 0 0 1 2.6 0" fill="none" stroke="#6fb0ec" stroke-width="0.6"/><circle cx="19" cy="4" r="2.6" fill="#e3f4e7" stroke="#78c08a" stroke-width="0.8"/><path d="M17.8 4l.9.9 1.5-1.6" fill="none" stroke="#5fb072" stroke-width="0.7"/></svg>
<svg class="a" style="left:162.10px;top:366.80px;" width="9" height="9" viewBox="0 0 9 9"><circle cx="4.5" cy="4.5" r="3.6" fill="#333"/><path d="M4.5 2.8v3.4M2.8 4.5h3.4" stroke="#fff" stroke-width="0.9"/></svg>
<div class="t" style="left:313.90px;top:368.69px;font-size:5.95px;line-height:6.65px;color:#1e1e22;">95% of site pages are affected by OG Meta issues</div>
<div class="a" style="left:314.00px;top:375.00px;width:566.50px;height:3.00px;background:#9dccf4;border-radius:1.5px"></div>
<div class="a" style="left:881.90px;top:375.00px;width:112.70px;height:3.00px;background:#96c7a0;border-radius:1.5px"></div>
<div class="a" style="left:155.00px;top:390.82px;width:23.70px;height:32.10px;background:#f4f3f6"></div>
<div class="a" style="left:178.70px;top:390.82px;width:123.00px;height:32.10px;background:#ffffff"></div>
<div class="a" style="left:278.20px;top:396.42px;width:17.00px;height:21.60px;background:#f5f5f7;border-radius:2px"></div>
<svg class="a" style="left:283.60px;top:400.12px;" width="6" height="6" viewBox="0 0 6 6"><circle cx="3" cy="3" r="2.4" fill="#9a9a9e" stroke="#6a6a6e" stroke-width="1.1"/><path d="M3 1.9v2.2M1.9 3h2.2" stroke="#f4f4f6" stroke-width="0.8"/></svg>
<div class="t" style="left:-13.40px;width:600px;text-align:center;top:406.99px;font-size:5.9px;line-height:6.59px;color:#76767a;-webkit-text-stroke:0.15px currentColor;">9.6</div>
<div class="t" style="left:183.60px;top:399.59px;font-size:7.0px;line-height:7.82px;color:#1f1f22;font-weight:bold;">Domain</div>
<div class="t" style="left:190.20px;top:408.54px;font-size:6.5px;line-height:7.26px;color:#5c5c60;">1</div>
<div class="t" style="left:203.20px;top:408.54px;font-size:6.5px;line-height:7.26px;color:#5c5c60;">1</div>
<svg class="a" style="left:180.00px;top:407.82px;" width="120" height="8" viewBox="0 0 120 8"><circle cx="6" cy="4" r="2.7" fill="#c9e3fa" stroke="#7db9ef" stroke-width="0.75"/><path d="M4.7 4.6a1.3 1.3 0 0 1 2.6 0" fill="none" stroke="#6fb0ec" stroke-width="0.6"/><circle cx="19" cy="4" r="2.6" fill="#e3f4e7" stroke="#78c08a" stroke-width="0.8"/><path d="M17.8 4l.9.9 1.5-1.6" fill="none" stroke="#5fb072" stroke-width="0.7"/></svg>
<svg class="a" style="left:162.10px;top:402.32px;" width="9" height="9" viewBox="0 0 9 9"><circle cx="4.5" cy="4.5" r="3.5" fill="none" stroke="#333" stroke-width="0.9"/><ellipse cx="4.5" cy="4.5" rx="1.5" ry="3.5" fill="none" stroke="#333" stroke-width="0.8"/><path d="M1 4.5h7" stroke="#333" stroke-width="0.8"/></svg>
<div class="t" style="left:313.90px;top:404.44px;font-size:5.95px;line-height:6.65px;color:#1e1e22;">Domain is affected by Domain issues</div>
<div class="a" style="left:314.00px;top:411.00px;width:96.80px;height:3.00px;background:#9dccf4;border-radius:1.5px"></div>
<div class="a" style="left:412.50px;top:411.00px;width:582.10px;height:3.00px;background:#96c7a0;border-radius:1.5px"></div>
<div class="a" style="left:155.00px;top:426.34px;width:23.70px;height:32.10px;background:#f4f3f6"></div>
<div class="a" style="left:178.70px;top:426.34px;width:123.00px;height:32.10px;background:#ffffff"></div>
<div class="a" style="left:278.20px;top:431.94px;width:17.00px;height:21.60px;background:#f5f5f7;border-radius:2px"></div>
<svg class="a" style="left:283.60px;top:435.64px;" width="6" height="6" viewBox="0 0 6 6"><circle cx="3" cy="3" r="2.4" fill="#9a9a9e" stroke="#6a6a6e" stroke-width="1.1"/><path d="M3 1.9v2.2M1.9 3h2.2" stroke="#f4f4f6" stroke-width="0.8"/></svg>
<div class="t" style="left:-13.40px;width:600px;text-align:center;top:442.51px;font-size:5.9px;line-height:6.59px;color:#76767a;-webkit-text-stroke:0.15px currentColor;">9</div>
<div class="t" style="left:183.60px;top:435.11px;font-size:7.0px;line-height:7.82px;color:#1f1f22;font-weight:bold;">Meta Description</div>
<div class="t" style="left:190.20px;top:444.06px;font-size:6.5px;line-height:7.26px;color:#5c5c60;">1</div>
<div class="t" style="left:203.20px;top:444.06px;font-size:6.5px;line-height:7.26px;color:#5c5c60;">1</div>
<div class="t" style="left:216.20px;top:444.06px;font-size:6.5px;line-height:7.26px;color:#5c5c60;">2</div>
<svg class="a" style="left:180.00px;top:443.34px;" width="120" height="8" viewBox="0 0 120 8"><circle cx="6" cy="4" r="2.6" fill="#fde3e1" stroke="#ec6a62" stroke-width="0.8"/><path d="M4.2 2.2L7.8 5.8" stroke="#ec6a62" stroke-width="0.8"/><path d="M19 1.2999999999999998L22 6.3H16z" fill="#fcd3b6" stroke="#f4a272" stroke-width="0.7" stroke-linejoin="round"/><path d="M19 3.1v1.6" stroke="#fff" stroke-width="0.6"/><circle cx="32" cy="4" r="2.6" fill="#e3f4e7" stroke="#78c08a" stroke-width="0.8"/><path d="M30.8 4l.9.9 1.5-1.6" fill="none" stroke="#5fb072" stroke-width="0.7"/></svg>
<svg class="a" style="left:162.10px;top:437.84px;" width="9" height="9" viewBox="0 0 9 9"><path d="M1.5 1.8h5M1.5 3.6h6M1.5 5.4h4M1.5 7.2h5.5" stroke="#444" stroke-width="0.9"/></svg>
<div class="t" style="left:313.90px;top:440.19px;font-size:5.95px;line-height:6.65px;color:#1e1e22;">72% of site pages are affected by Meta Description issues</div>
<div class="a" style="left:314.00px;top:447.00px;width:226.20px;height:3.00px;background:#f2a0a2;border-radius:1.5px"></div>
<div class="a" style="left:541.60px;top:447.00px;width:226.00px;height:3.00px;background:#f8c4a2;border-radius:1.5px"></div>
<div class="a" style="left:769.00px;top:447.00px;width:225.60px;height:3.00px;background:#96c7a0;border-radius:1.5px"></div>
<div class="a" style="left:155.00px;top:461.86px;width:23.70px;height:32.10px;background:#f4f3f6"></div>
<div class="a" style="left:178.70px;top:461.86px;width:123.00px;height:32.10px;background:#ffffff"></div>
<div class="a" style="left:278.20px;top:467.46px;width:17.00px;height:21.60px;background:#f5f5f7;border-radius:2px"></div>
<svg class="a" style="left:283.60px;top:471.16px;" width="6" height="6" viewBox="0 0 6 6"><circle cx="3" cy="3" r="2.4" fill="#9a9a9e" stroke="#6a6a6e" stroke-width="1.1"/><path d="M3 1.9v2.2M1.9 3h2.2" stroke="#f4f4f6" stroke-width="0.8"/></svg>
<div class="t" style="left:-13.40px;width:600px;text-align:center;top:478.03px;font-size:5.9px;line-height:6.59px;color:#76767a;-webkit-text-stroke:0.15px currentColor;">9</div>
<div class="t" style="left:183.60px;top:470.63px;font-size:7.0px;line-height:7.82px;color:#1f1f22;font-weight:bold;">Page Headers</div>
<div class="t" style="left:190.20px;top:479.58px;font-size:6.5px;line-height:7.26px;color:#5c5c60;">2</div>
<div class="t" style="left:203.20px;top:479.58px;font-size:6.5px;line-height:7.26px;color:#5c5c60;">3</div>
<div class="t" style="left:216.20px;top:479.58px;font-size:6.5px;line-height:7.26px;color:#5c5c60;">5</div>
<svg class="a" style="left:180.00px;top:478.86px;" width="120" height="8" viewBox="0 0 120 8"><path d="M6 1.2999999999999998L9 6.3H3z" fill="#fcd3b6" stroke="#f4a272" stroke-width="0.7" stroke-linejoin="round"/><path d="M6 3.1v1.6" stroke="#fff" stroke-width="0.6"/><circle cx="19" cy="4" r="2.7" fill="#c9e3fa" stroke="#7db9ef" stroke-width="0.75"/><path d="M17.7 4.6a1.3 1.3 0 0 1 2.6 0" fill="none" stroke="#6fb0ec" stroke-width="0.6"/><circle cx="32" cy="4" r="2.6" fill="#e3f4e7" stroke="#78c08a" stroke-width="0.8"/><path d="M30.8 4l.9.9 1.5-1.6" fill="none" stroke="#5fb072" stroke-width="0.7"/></svg>
<div class="t" style="left:-133.40px;width:600px;text-align:center;top:472.51px;font-size:10px;line-height:11.17px;color:#444;font-family:'Liberation Serif',serif;">H</div>
<div class="t" style="left:313.90px;top:475.94px;font-size:5.95px;line-height:6.65px;color:#1e1e22;">57% of site pages are affected by Page Headers issues</div>
<div class="a" style="left:314.00px;top:482.00px;width:226.20px;height:3.00px;background:#f8c4a2;border-radius:1.5px"></div>
<div class="a" style="left:541.60px;top:482.00px;width:339.20px;height:3.00px;background:#9dccf4;border-radius:1.5px"></div>
<div class="a" style="left:882.20px;top:482.00px;width:112.40px;height:3.00px;background:#96c7a0;border-radius:1.5px"></div>
<div class="a" style="left:155.00px;top:497.38px;width:23.70px;height:32.10px;background:#f4f3f6"></div>
<div class="a" style="left:178.70px;top:497.38px;width:123.00px;height:32.10px;background:#ffffff"></div>
<div class="a" style="left:278.20px;top:502.98px;width:17.00px;height:21.60px;background:#f5f5f7;border-radius:2px"></div>
<svg class="a" style="left:283.60px;top:506.68px;" width="6" height="6" viewBox="0 0 6 6"><circle cx="3" cy="3" r="2.4" fill="#9a9a9e" stroke="#6a6a6e" stroke-width="1.1"/><path d="M3 1.9v2.2M1.9 3h2.2" stroke="#f4f4f6" stroke-width="0.8"/></svg>
<div class="t" style="left:-13.40px;width:600px;text-align:center;top:513.55px;font-size:5.9px;line-height:6.59px;color:#76767a;-webkit-text-stroke:0.15px currentColor;">7</div>
<div class="t" style="left:183.60px;top:506.15px;font-size:7.0px;line-height:7.82px;color:#1f1f22;font-weight:bold;">Page URL</div>
<div class="t" style="left:190.20px;top:515.10px;font-size:6.5px;line-height:7.26px;color:#5c5c60;">1</div>
<div class="t" style="left:203.20px;top:515.10px;font-size:6.5px;line-height:7.26px;color:#5c5c60;">1</div>
<svg class="a" style="left:180.00px;top:514.38px;" width="120" height="8" viewBox="0 0 120 8"><circle cx="6" cy="4" r="2.7" fill="#c9e3fa" stroke="#7db9ef" stroke-width="0.75"/><path d="M4.7 4.6a1.3 1.3 0 0 1 2.6 0" fill="none" stroke="#6fb0ec" stroke-width="0.6"/><circle cx="19" cy="4" r="2.6" fill="#e3f4e7" stroke="#78c08a" stroke-width="0.8"/><path d="M17.8 4l.9.9 1.5-1.6" fill="none" stroke="#5fb072" stroke-width="0.7"/></svg>
<svg class="a" style="left:162.10px;top:508.88px;" width="9" height="9" viewBox="0 0 9 9"><path d="M0.8 1.5h7.6v6.5H0.8z" fill="#333"/><path d="M0.8 3h7.6" stroke="#777" stroke-width="0.5"/></svg>
<div class="t" style="left:313.90px;top:511.69px;font-size:5.95px;line-height:6.65px;color:#1e1e22;">35% of site pages are affected by Page URL issues</div>
<div class="a" style="left:314.00px;top:518.00px;width:169.50px;height:3.00px;background:#9dccf4;border-radius:1.5px"></div>
<div class="a" style="left:485.30px;top:518.00px;width:509.30px;height:3.00px;background:#96c7a0;border-radius:1.5px"></div>
<div class="a" style="left:155.00px;top:532.90px;width:23.70px;height:32.10px;background:#f4f3f6"></div>
<div class="a" style="left:178.70px;top:532.90px;width:123.00px;height:32.10px;background:#ffffff"></div>
<div class="a" style="left:278.20px;top:538.50px;width:17.00px;height:21.60px;background:#f5f5f7;border-radius:2px"></div>
<svg class="a" style="left:283.60px;top:542.20px;" width="6" height="6" viewBox="0 0 6 6"><circle cx="3" cy="3" r="2.4" fill="#9a9a9e" stroke="#6a6a6e" stroke-width="1.1"/><path d="M3 1.9v2.2M1.9 3h2.2" stroke="#f4f4f6" stroke-width="0.8"/></svg>
<div class="t" style="left:-13.40px;width:600px;text-align:center;top:549.07px;font-size:5.9px;line-height:6.59px;color:#76767a;-webkit-text-stroke:0.15px currentColor;">3</div>
<div class="t" style="left:183.60px;top:541.67px;font-size:7.0px;line-height:7.82px;color:#1f1f22;font-weight:bold;">Page Title</div>
<div class="t" style="left:190.20px;top:550.62px;font-size:6.5px;line-height:7.26px;color:#5c5c60;">2</div>
<div class="t" style="left:203.20px;top:550.62px;font-size:6.5px;line-height:7.26px;color:#5c5c60;">3</div>
<div class="t" style="left:216.20px;top:550.62px;font-size:6.5px;line-height:7.26px;color:#5c5c60;">6</div>
<svg class="a" style="left:180.00px;top:549.90px;" width="120" height="8" viewBox="0 0 120 8"><path d="M6 1.2999999999999998L9 6.3H3z" fill="#fcd3b6" stroke="#f4a272" stroke-width="0.7" stroke-linejoin="round"/><path d="M6 3.1v1.6" stroke="#fff" stroke-width="0.6"/><circle cx="19" cy="4" r="2.7" fill="#c9e3fa" stroke="#7db9ef" stroke-width="0.75"/><path d="M17.7 4.6a1.3 1.3 0 0 1 2.6 0" fill="none" stroke="#6fb0ec" stroke-width="0.6"/><circle cx="32" cy="4" r="2.6" fill="#e3f4e7" stroke="#78c08a" stroke-width="0.8"/><path d="M30.8 4l.9.9 1.5-1.6" fill="none" stroke="#5fb072" stroke-width="0.7"/></svg>
<svg class="a" style="left:162.10px;top:544.40px;" width="9" height="9" viewBox="0 0 9 9"><circle cx="4.5" cy="4.5" r="3.8" fill="#3a3a6a"/><path d="M3 3h3M4.5 3v3" stroke="#fff" stroke-width="0.8"/></svg>
<div class="t" style="left:313.90px;top:547.44px;font-size:5.95px;line-height:6.65px;color:#1e1e22;">77% of site pages are affected by Page Title issues</div>
<div class="a" style="left:314.00px;top:554.00px;width:248.00px;height:3.00px;background:#f8c4a2;border-radius:1.5px"></div>
<div class="a" style="left:564.00px;top:554.00px;width:430.60px;height:3.00px;background:#96c7a0;border-radius:1.5px"></div>
<div class="a" style="left:142.80px;top:161.80px;width:162.00px;height:387.40px;border:2px solid #6c7ff2;box-sizing:border-box"></div>
<div class="a" style="left:137px;top:552.5px;width:887px;height:1.5px;background:repeating-linear-gradient(90deg,#505056 0 2.5px,#c8c8cc 2.5px 3.5px)"></div>
<div class="a" style="left:993.9px;top:524.2px;width:21.8px;height:21.8px;border-radius:50%;background:#fff;box-shadow:0 0 4px rgba(0,0,0,0.10)"></div>
<svg class="a" style="left:999.70px;top:529.20px;" width="11" height="12" viewBox="0 0 11 12"><path d="M0.6 1.6a1.2 1.2 0 0 1 1.2-1.2h7.4a1.2 1.2 0 0 1 1.2 1.2v9.8l-2.4-1.6H1.8a1.2 1.2 0 0 1-1.2-1.2z" fill="#141416"/><path d="M2.6 6.9c1.8 1.1 4 1.1 5.8 0" fill="none" stroke="#fff" stroke-width="0.7"/></svg>
</div></body></html>
